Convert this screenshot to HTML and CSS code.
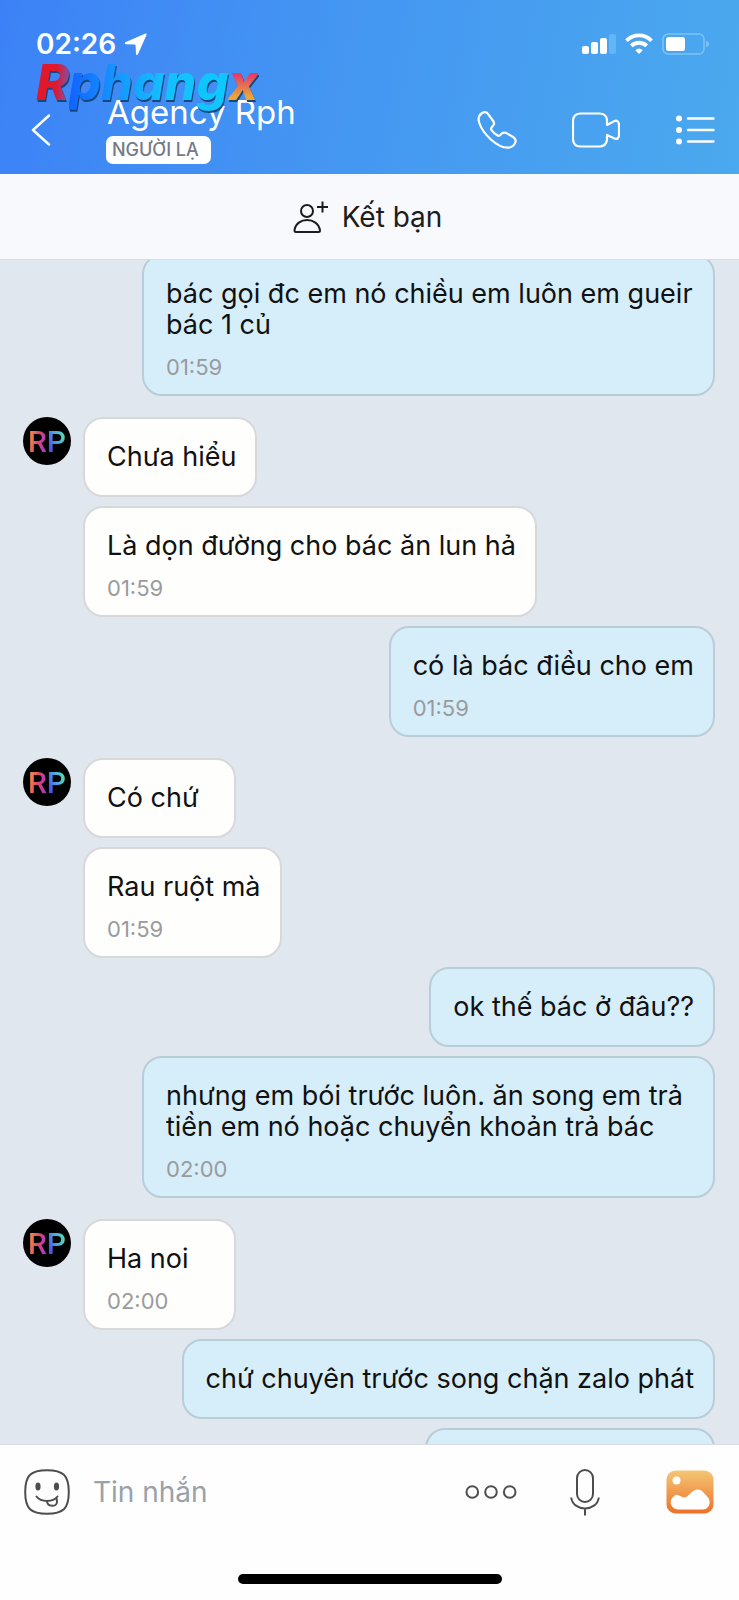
FILE: index.html
```html
<!DOCTYPE html>
<html lang="vi">
<head>
<meta charset="utf-8">
<meta name="viewport" content="width=device-width, initial-scale=1">
<title>Agency Rph</title>
<link rel="stylesheet" href="styles.css">
</head>
<body>
<div class="app">
  <header class="header">
    <div class="status">
      <div class="status-left">
        <span class="clock">02:26</span>
        <svg width="23" height="23" viewBox="0 0 23 23" aria-hidden="true"><path d="M21.500 .4Q23 .2 22.600 1.700L14 21.300Q13 22.900 12 21.200L11.600 12.800Q11.500 11.600 10.300 11.500L1.700 11.200Q0 10.400 1.300 9.200Z" fill="#fff"/></svg>
      </div>
      <div class="status-right">
        <svg width="34" height="22" viewBox="0 0 34 22" aria-hidden="true"><g fill="#fff"><rect x="0" y="13" width="7" height="8" rx="2"/><rect x="9" y="9" width="7" height="12" rx="2"/><rect x="18" y="5" width="7" height="16" rx="2"/><rect x="27" y="1" width="7" height="20" rx="2" fill="#62b6f5"/></g></svg>
        <svg width="28" height="22" viewBox="0 0 28 22" aria-hidden="true"><g fill="none" stroke="#fff" stroke-width="3.800"><path d="M1.500 7.700C8.300 .7 19.700 .7 26.500 7.700"/><path d="M6.300 12.800C10.500 8.700 17.500 8.700 21.700 12.800"/></g><path d="M10.300 17.200Q14 14 17.700 17.200L14 21Z" fill="#fff"/></svg>
        <svg width="48" height="22" viewBox="0 0 48 22" aria-hidden="true"><rect x="1" y="1" width="41" height="20" rx="5" fill="none" stroke="#7cc3f5" stroke-width="1.600"/><rect x="4" y="4" width="19" height="14" rx="2.500" fill="#fff"/><path d="M44 8Q47 8.500 47 11T44 14Z" fill="#7cc3f5"/></svg>
      </div>
    </div>
    <div class="nav">
      <button class="icon-button" aria-label="Quay lại"><svg width="20" height="32" viewBox="0 0 20 32"><path d="M18 1.500L2 16L18 30.500" fill="none" stroke="#fff" stroke-width="2.400" stroke-linecap="round" stroke-linejoin="round"/></svg></button>
      <div class="contact">
        <h1 class="name">Agency Rph</h1>
        <span class="badge">NGƯỜI LẠ</span>
      </div>
      <div class="actions">
        <button class="icon-button" aria-label="Gọi điện"><svg width="40" height="38" viewBox="0 0 40 38"><path d="M4.500 2.500C7 .7 9.500 .8 11 2.800L16.500 10.500C17.600 12.300 17.200 13.500 16 14.800C14.500 16.500 13.300 17.300 14.300 18.800C16 21.600 18.700 23.500 21 24.700C22.800 25.600 23.500 23.600 25 22.400C26.700 21.100 28.500 21.500 30 22.400L36.500 26.300C38.900 27.800 39 29.600 38.300 31.500C37.300 34.500 34.700 36.300 31.500 36.700C20.500 37.300 6 23 2.300 12C.9 8 1.600 4.700 4.500 2.500Z" fill="none" stroke="#fff" stroke-width="2.200" stroke-linejoin="round"/></svg></button>
        <button class="icon-button" aria-label="Gọi video"><svg width="48" height="36" viewBox="0 0 48 36"><path d="M35 13L42.500 9Q44.500 8.200 46 9.700Q47 10.700 47 13V23Q47 25.500 45.600 26.500Q44.300 27.300 42.500 26.500L35 23V28Q34 34 28 34.500H8Q1.500 34 1 27.500V8.500Q1.500 2 8 1.500H28Q34.500 2 35 8Z" fill="none" stroke="#fff" stroke-width="2.200" stroke-linejoin="round"/></svg></button>
        <button class="icon-button" aria-label="Tùy chọn"><svg width="40" height="30" viewBox="0 0 40 30"><g fill="#fff"><circle cx="4" cy="3.500" r="3"/><circle cx="4" cy="15" r="3"/><circle cx="4" cy="26.500" r="3"/></g><path d="M13 3.500H38.500M13 15H38.500M13 26.500H38.500" stroke="#fff" stroke-width="2.400" stroke-linecap="round"/></svg></button>
      </div>
    </div>
    <div class="brand"><span class="brand-red">R</span><span class="brand-blue">phang</span><span class="brand-gold">x</span></div>
  </header>

  <button class="add-friend">
    <svg width="36" height="34" viewBox="0 0 36 34" aria-hidden="true"><g fill="none" stroke="#1c1c1c" stroke-width="2"><circle cx="14" cy="11" r="6"/><path d="M1.500 30.500C3 16.500 25 16.500 27 30.500Q27 32 25.500 32H3Q1.500 32 1.500 30.500Z"/><path d="M24 7H35M29.500 1.500V12.500"/></g></svg>
    <span>Kết bạn</span>
  </button>

  <main class="chat">
    <div class="message sent first"><p class="text">bác gọi đc em nó chiều em luôn em gueir bác 1 củ</p><time class="time">01:59</time></div>
    <div class="group">
      <div class="avatar"><span class="letter-r">R</span><span class="letter-p">P</span></div>
      <div class="thread">
        <div class="message"><p class="text">Chưa hiểu</p></div>
        <div class="message"><p class="text">Là dọn đường cho bác ăn lun hả</p><time class="time">01:59</time></div>
      </div>
    </div>
    <div class="message sent"><p class="text">có là bác điều cho em</p><time class="time">01:59</time></div>
    <div class="group">
      <div class="avatar"><span class="letter-r">R</span><span class="letter-p">P</span></div>
      <div class="thread">
        <div class="message"><p class="text">Có chứ</p></div>
        <div class="message"><p class="text">Rau ruột mà</p><time class="time">01:59</time></div>
      </div>
    </div>
    <div class="message sent"><p class="text">ok thế bác ở đâu??</p></div>
    <div class="message sent"><p class="text">nhưng em bói trước luôn. ăn song em trả tiền em nó hoặc chuyển khoản trả bác</p><time class="time">02:00</time></div>
    <div class="group">
      <div class="avatar"><span class="letter-r">R</span><span class="letter-p">P</span></div>
      <div class="thread">
        <div class="message"><p class="text">Ha noi</p><time class="time">02:00</time></div>
      </div>
    </div>
    <div class="message sent"><p class="text">chứ chuyên trước song chặn zalo phát</p></div>
    <div class="message sent partial"></div>
  </main>

  <footer class="footer">
    <form class="composer">
      <button type="button" class="icon-button" aria-label="Nhãn dán"><svg width="46" height="46" viewBox="0 0 46 46"><g fill="none" stroke="#4d4d4d" stroke-width="2"><path d="M23 1.200C39 1.200 44.800 6 44.800 23S39 44.800 23 44.800S1.200 40 1.200 23S7 1.200 23 1.200Z"/><path d="M12.500 27.500C17 33.500 29 33.500 33.500 27.500" stroke-linecap="round"/><path d="M23 32C23.300 38.500 32.800 38 33 33L32.500 29"/></g><g fill="#4d4d4d"><ellipse cx="14" cy="17.500" rx="2.600" ry="4"/><ellipse cx="32.500" cy="17.500" rx="2.600" ry="4"/></g></svg></button>
      <input class="field" type="text" placeholder="Tin nhắn" aria-label="Tin nhắn">
      <button type="button" class="icon-button" aria-label="Thêm"><svg width="52" height="16" viewBox="0 0 52 16"><g fill="none" stroke="#4d4d4d" stroke-width="2"><circle cx="7.300" cy="8" r="5.800"/><circle cx="26" cy="8" r="5.800"/><circle cx="44.700" cy="8" r="5.800"/></g></svg></button>
      <button type="button" class="icon-button mic" aria-label="Ghi âm"><svg width="30" height="48" viewBox="0 0 30 48"><g fill="none" stroke="#4d4d4d" stroke-width="2"><rect x="7" y="2" width="16" height="32" rx="8"/><path d="M1.200 29.500C3 44 27 44 28.800 29.500M15 40.500V47.500"/></g></svg></button>
      <button type="button" class="icon-button" aria-label="Gửi ảnh"><svg width="48" height="44" viewBox="0 0 48 44"><defs><linearGradient id="photo" x1="0" y1="0" x2="0" y2="1"><stop offset="0" stop-color="#f4c675"/><stop offset="1" stop-color="#ee7028"/></linearGradient></defs><rect x=".5" y=".5" width="47" height="43" rx="9" fill="url(#photo)"/><circle cx="10.500" cy="10.500" r="4" fill="#fff"/><path d="M7 27C9.500 24.500 11 24 13 25.500L17 27.300Q19 28 21 26.500L26 22C29 19 34 18.500 37 22L42.500 28C45.500 33.500 42.500 39.500 36.500 39.500H12C5 39 2.500 31.500 7 27Z" fill="#fff"/></svg></button>
    </form>
    <div class="home-indicator"></div>
  </footer>
</div>
</body>
</html>
```
FILE: styles.css
```css
* { box-sizing: border-box; }

body {
  margin: 0;
  font-family: Inter, "Noto Sans", sans-serif;
  color: #111;
}

button, input { font: inherit; color: inherit; }

svg { display: block; flex: none; }

.app {
  display: flex;
  flex-direction: column;
  height: 100vh;
  overflow: hidden;
}

.header {
  position: relative;
  flex: none;
  height: 174px;
  background: linear-gradient(100deg, #3c82f7 0%, #4496f2 45%, #4ba9ee 100%);
  color: #fff;
}

.status {
  display: flex;
  justify-content: space-between;
  align-items: center;
  height: 88px;
  padding: 0 29px 0 36px;
}

.status-left { display: flex; align-items: center; gap: 8px; }
.status-right { display: flex; align-items: center; gap: 9px; }

.clock { font-size: 28px; line-height: 32px; font-weight: 600; }

.nav {
  display: flex;
  align-items: center;
  height: 84px;
  padding: 0 24px 0 31px;
}

.icon-button {
  flex: none;
  padding: 0;
  border: 0;
  background: none;
  cursor: pointer;
}

.contact {
  flex: 1;
  display: flex;
  flex-direction: column;
  align-items: flex-start;
  gap: 7px;
  height: 70px;
  padding-left: 55px;
}

.name {
  margin: 0;
  padding-left: 1px;
  font-size: 33px;
  line-height: 34px;
  font-weight: 400;
}

.badge {
  padding: 0 12px 0 6px;
  border-radius: 7px;
  background: #fff;
  color: #737b87;
  font-size: 18px;
  line-height: 28px;
  font-weight: 500;
}

.actions { display: flex; align-items: center; gap: 55px; }

.brand {
  position: absolute;
  left: 36px;
  top: 52px;
  font-size: 50px;
  line-height: 60px;
  font-weight: 800;
  font-style: italic;
  filter: drop-shadow(1px 2px 0 #16487f);
}

.brand span {
  -webkit-background-clip: text;
  background-clip: text;
  color: transparent;
}

.brand-red { background-image: linear-gradient(95deg, #e0182c 60%, #7c55b0 95%); }
.brand-blue { background-image: linear-gradient(90deg, #1262ff 0%, #1593ff 28%, #15bfff 60%, #0cc9ff 100%); }
.brand-gold { background-image: linear-gradient(180deg, #e83368 35%, #e7a83b 75%); }

.add-friend {
  flex: none;
  display: flex;
  justify-content: center;
  align-items: center;
  gap: 13px;
  height: 86px;
  padding: 0 4px 0 0;
  border: 0;
  border-bottom: 1px solid #d9dce1;
  background: #f8f9fd;
  color: #1c1c1c;
  font-size: 28px;
}

.chat {
  flex: 1;
  min-height: 0;
  display: flex;
  flex-direction: column;
  align-items: flex-start;
  gap: 9px;
  padding: 0 24px 0 23px;
  overflow: hidden;
  background: #e1e7ef;
}

.group {
  flex: none;
  display: flex;
  align-items: flex-start;
  gap: 12px;
  padding-top: 12px;
}

.thread {
  display: flex;
  flex-direction: column;
  align-items: flex-start;
  gap: 9px;
}

.avatar {
  flex: none;
  display: flex;
  justify-content: center;
  width: 48px;
  height: 48px;
  border-radius: 50%;
  background: #000;
  font-family: Roboto, sans-serif;
  font-size: 30px;
  line-height: 49px;
  font-weight: 500;
}

.avatar span {
  -webkit-background-clip: text;
  background-clip: text;
  color: transparent;
}

.letter-r { background-image: linear-gradient(100deg, #ef8a45 20%, #e0466c 50%, #b438c8 80%); }
.letter-p { background-image: linear-gradient(70deg, #4b55e8 25%, #4aa2e6 50%, #58eda5 85%); }

.message {
  flex: none;
  min-width: 153px;
  max-width: 573px;
  padding: 22px 19px 23px 22px;
  border: 2px solid #d7d8da;
  border-radius: 20px;
  background: #fefefd;
}

.sent {
  align-self: flex-end;
  border-color: #b9cdd7;
  background: #d6eefa;
}

.first { margin-top: -6px; }

.text {
  margin: 0;
  font-size: 27px;
  line-height: 31px;
}

.time {
  display: block;
  margin: 12px 0 -11px;
  font-size: 22px;
  line-height: 30px;
  color: #999b9d;
}

.partial { width: 290px; height: 80px; }

.footer {
  flex: none;
  border-top: 1px solid #d9dce1;
  background: #fefefe;
}

.composer {
  display: flex;
  align-items: center;
  height: 94px;
  padding: 0 25px 0 24px;
}

.field {
  flex: 1;
  min-width: 0;
  height: 48px;
  margin: 0 24px 0 23px;
  padding: 0;
  border: 0;
  outline: 0;
  background: none;
  font-size: 28px;
}

.field::placeholder { color: #99a1a9; opacity: 1; }

.mic { margin: 0 66px 0 53px; }

.home-indicator {
  width: 264px;
  height: 10px;
  margin: 35px auto 16px;
  border-radius: 5px;
  background: #000;
}
```
